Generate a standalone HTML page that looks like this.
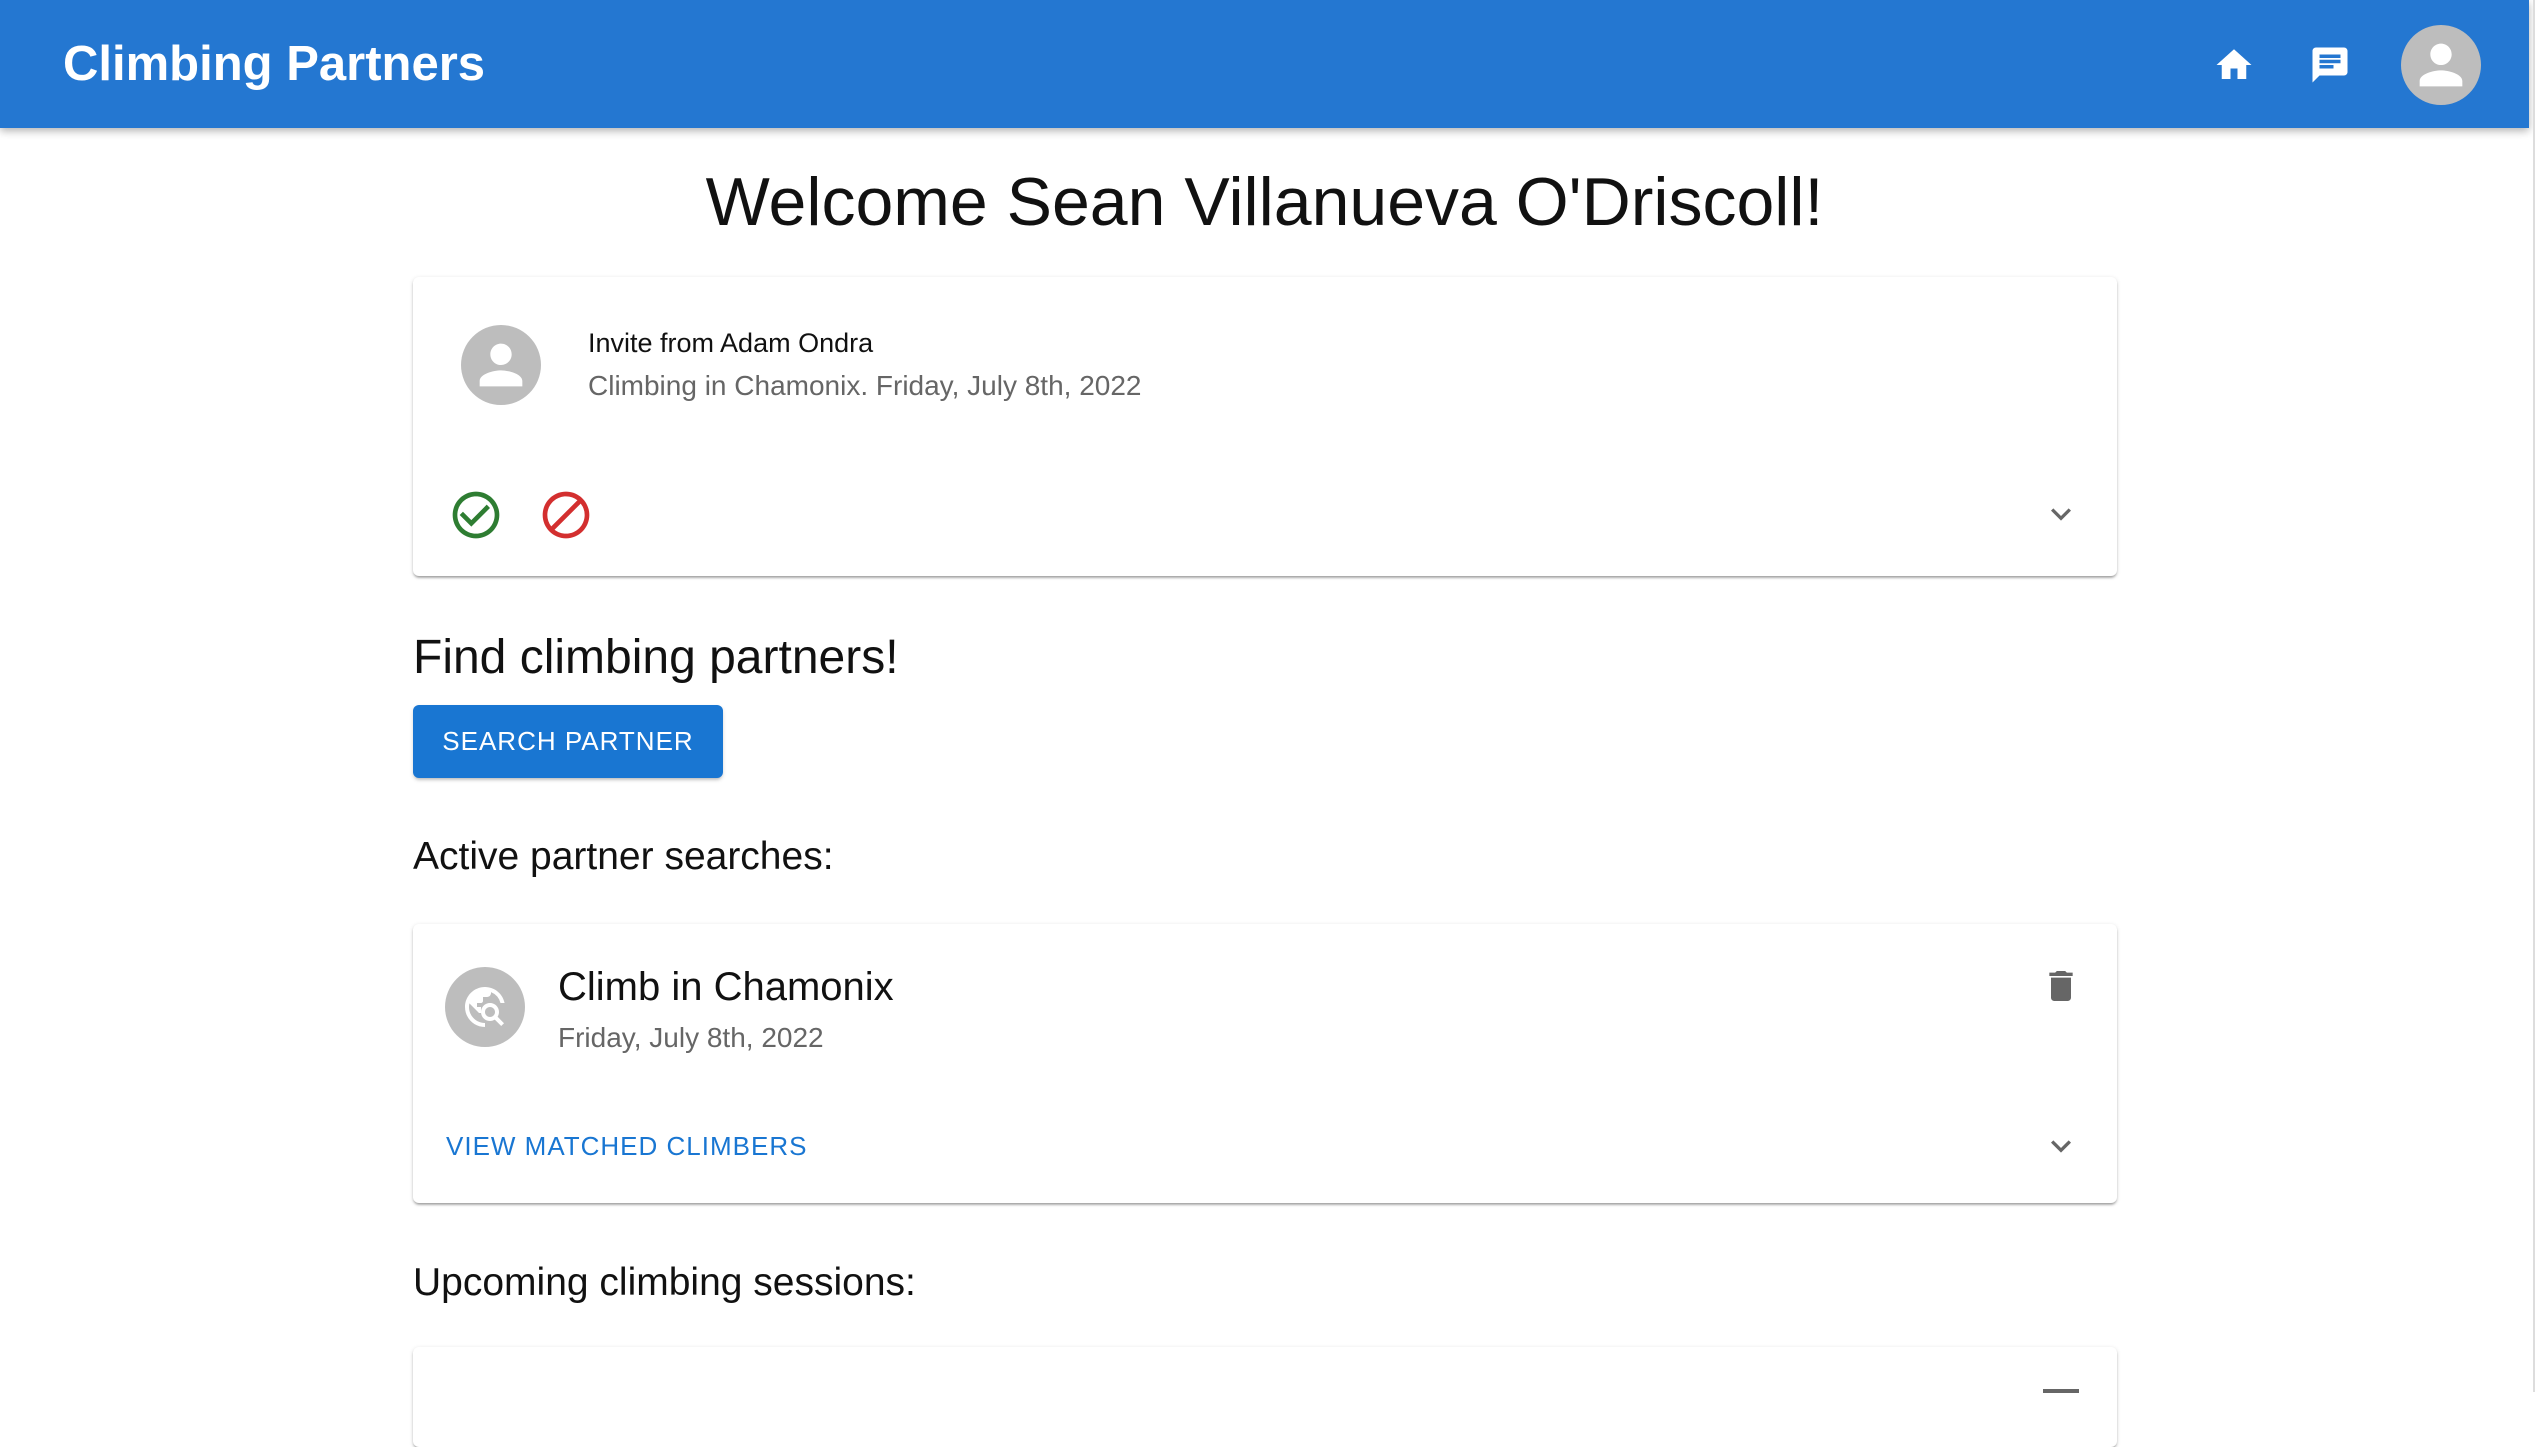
<!DOCTYPE html>
<html><head><meta charset="utf-8"><style>
*{box-sizing:border-box;margin:0;padding:0}
body{width:2542px;height:1392px;overflow:hidden;background:#fff;font-family:"Liberation Sans",Arial,sans-serif;color:#111;position:relative}
.hdr{position:absolute;left:0;top:0;width:2529px;height:128px;background:#2477d1;box-shadow:0 3px 8px rgba(0,0,0,.3)}
.logo{position:absolute;left:63px;top:36px;font-size:49px;font-weight:bold;color:#fff;letter-spacing:0px}
.abs{position:absolute}
.card{position:absolute;left:413px;width:1704px;background:#fff;border-radius:6px;box-shadow:0 2px 2px rgba(0,0,0,.18),0 1px 5px rgba(0,0,0,.12),0 3px 2px -2px rgba(0,0,0,.2)}
.av{position:absolute;width:80px;height:80px;border-radius:50%;background:#bdbdbd;overflow:hidden}
.sb{position:absolute;left:2533px;top:0;width:9px;height:1392px;background:#fff;border-left:2px solid #ddd}
</style></head><body>
<div class="hdr">
<div class="logo">Climbing Partners</div>
<svg class="abs" style="left:2213px;top:44px" width="42" height="42" viewBox="0 0 24 24"><path fill="#fff" d="M10 20v-6h4v6h5v-8h3L12 3 2 12h3v8z"/></svg>
<svg class="abs" style="left:2309px;top:44px" width="42" height="42" viewBox="0 0 24 24"><path fill="#fff" d="M20 2H4c-1.1 0-2 .9-2 2v18l4-4h14c1.1 0 2-.9 2-2V4c0-1.1-.9-2-2-2zM6 9h12v2H6V9zm8 5H6v-2h8v2zm4-6H6V6h12v2z"/></svg>
<div class="av" style="left:2401px;top:25px">
<svg width="80" height="80" viewBox="0 0 24 24"><path fill="#fff" d="M12 12c2.210 0 4-1.79 4-4s-1.79-4-4-4-4 1.79-4 4 1.79 4 4 4zm0 2c-2.67 0-8 1.34-8 4v2h16v-2c0-2.66-5.33-4-8-4z" transform="translate(2.4 2.4) scale(.8)"/></svg></div>
</div>
<div class="abs" style="left:0;width:2529px;top:163px;text-align:center;font-size:68px">Welcome Sean Villanueva O'Driscoll!</div>

<div class="card" style="top:277px;height:299px">
<div class="av" style="left:48px;top:48px"><svg width="80" height="80" viewBox="0 0 24 24"><path fill="#fff" d="M12 12c2.21 0 4-1.79 4-4s-1.79-4-4-4-4 1.79-4 4 1.79 4 4 4zm0 2c-2.67 0-8 1.34-8 4v2h16v-2c0-2.66-5.330-4-8-4z" transform="translate(2.4 2.4) scale(.8)"/></svg></div>
<div class="abs" style="left:175px;top:51px;font-size:27px;color:#111">Invite from Adam Ondra</div>
<div class="abs" style="left:175px;top:93px;font-size:28px;color:#666">Climbing in Chamonix. Friday, July 8th, 2022</div>
<svg class="abs" style="left:35px;top:210px" width="56" height="56" viewBox="0 0 24 24"><path fill="#2e7d32" d="M16.59 7.58 10 14.17l-3.59-3.58L5 12l5 5 8-8zM12 2C6.48 2 2 6.48 2 12s4.48 10 10 10 10-4.48 10-10S17.52 2 12 2zm0 18c-4.42 0-8-3.58-8-8s3.58-8 8-8 8 3.58 8 8-3.58 8-8 8z"/></svg>
<svg class="abs" style="left:125px;top:210px" width="56" height="56" viewBox="0 0 24 24"><path fill="#d32f2f" d="M12 2C6.48 2 2 6.48 2 12s4.48 10 10 10 10-4.48 10-10S17.52 2 12 2zM4 12c0-4.42 3.58-8 8-8 1.85 0 3.55.63 4.9 1.69L5.690 16.9A7.902 7.902 0 0 1 4 12zm8 8c-1.85 0-3.55-.63-4.9-1.69L18.31 7.1A7.902 7.902 0 0 1 20 12c0 4.42-3.58 8-8 8z"/></svg>
<svg class="abs" style="left:1628px;top:217px" width="40" height="40" viewBox="0 0 24 24"><path fill="#666" d="M16.59 8.59 12 13.17 7.41 8.59 6 10l6 6 6-6z"/></svg>
</div>

<div class="abs" style="left:413px;top:630px;font-size:48px">Find climbing partners!</div>
<div class="abs" style="left:413px;top:705px;width:310px;height:73px;background:#1976d2;border-radius:6px;box-shadow:0 3px 3px -2px rgba(0,0,0,.2),0 2px 4px rgba(0,0,0,.14);color:#fff;font-size:26px;font-weight:500;letter-spacing:1px;text-align:center;line-height:73px">SEARCH PARTNER</div>
<div class="abs" style="left:413px;top:835px;font-size:39px;font-weight:500">Active partner searches:</div>

<div class="card" style="top:924px;height:279px">
<div class="av" style="left:32px;top:43px"><svg width="80" height="80" viewBox="0 0 24 24"><g transform="translate(4.8 4.8) scale(.6)"><path fill="#fff" d="M18.3 16.9c.4-.7.7-1.5.7-2.4 0-2.5-2-4.5-4.5-4.5S10 12 10 14.5s2 4.5 4.5 4.5c.9 0 1.7-.3 2.4-.7l3.2 3.2 1.4-1.4-3.2-3.2zm-3.8.1c-1.4 0-2.5-1.1-2.5-2.5s1.1-2.5 2.5-2.5 2.5 1.1 2.5 2.5-1.1 2.5-2.5 2.5zM12 20v2C6.48 22 2 17.52 2 12S6.48 2 12 2c4.84 0 8.87 3.44 9.8 8h-2.07A8 8 0 0 0 15 4.59V5c0 1.1-.9 2-2 2h-2v2c0 .55-.45 1-1 1H8v2h2v3H9l-4.79-4.79C4.08 10.79 4 11.38 4 12c0 4.41 3.59 8 8 8z"/></g></svg></div>
<div class="abs" style="left:145px;top:41px;font-size:40px;color:#111">Climb in Chamonix</div>
<div class="abs" style="left:145px;top:98px;font-size:28px;color:#666">Friday, July 8th, 2022</div>
<svg class="abs" style="left:1628px;top:42px" width="40" height="40" viewBox="0 0 24 24"><path fill="#666" d="M6 19c0 1.1.9 2 2 2h8c1.1 0 2-.9 2-2V7H6v12zM19 4h-3.5l-1-1h-5l-1 1H5v2h14V4z"/></svg>
<div class="abs" style="left:33px;top:207px;font-size:26px;color:#1976d2;font-weight:500;letter-spacing:1px">VIEW MATCHED CLIMBERS</div>
<svg class="abs" style="left:1628px;top:202px" width="40" height="40" viewBox="0 0 24 24"><path fill="#666" d="M16.59 8.59 12 13.17 7.41 8.59 6 10l6 6 6-6z"/></svg>
</div>

<div class="abs" style="left:413px;top:1261px;font-size:39px;font-weight:500">Upcoming climbing sessions:</div>
<div class="card" style="top:1347px;height:100px">
<div class="abs" style="left:1630px;top:42px;width:36px;height:4px;background:#666"></div>
</div>
<div class="sb"></div>
</body></html>
